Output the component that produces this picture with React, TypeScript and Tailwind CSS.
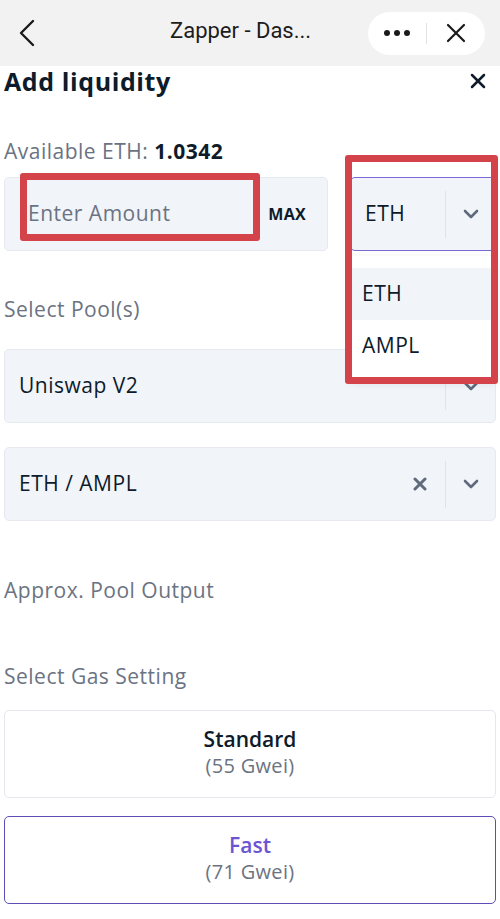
import React from 'react';

const Chevron = () => (
  <svg width="16" height="10" viewBox="0 0 16 10" fill="none">
    <path d="M2 2l6 6 6-6" stroke="#5f6b7c" strokeWidth="2.6" strokeLinecap="round" strokeLinejoin="round" />
  </svg>
);

const ClearX = () => (
  <svg width="14" height="14" viewBox="0 0 14 14" fill="none">
    <path d="M2 2l10 10M12 2L2 12" stroke="#5f6b7c" strokeWidth="3" strokeLinecap="round" />
  </svg>
);

function Select({ label, clearable = false, focused = false }: { label: string; clearable?: boolean; focused?: boolean }) {
  return (
    <div
      className={`flex items-center h-[74px] rounded-[5px] bg-[#f1f4f9] border ${
        focused ? 'border-[#7a68d3]' : 'border-[#e6e9ef]'
      }`}
    >
      <span className="flex-1 pl-[14px] text-[21px] tracking-[0.5px] text-[#0d1b2a]">{label}</span>
      {clearable && (
        <span className="w-[50px] flex justify-center">
          <ClearX />
        </span>
      )}
      <span className="w-px h-[47px] bg-[#dfe3ea]" />
      <span className="w-[49px] flex justify-center">
        <Chevron />
      </span>
    </div>
  );
}

function GasButton({ name, gwei, active = false }: { name: string; gwei: string; active?: boolean }) {
  return (
    <div
      className={`h-[88px] rounded-[5px] border flex flex-col items-center justify-center pb-[3px] bg-white ${
        active ? 'border-[#5b4fb5]' : 'border-[#e4e7ec]'
      }`}
    >
      <span className={`text-[21px] font-semibold leading-[27px] ${active ? 'text-[#6b55d3]' : 'text-[#0d1b2a]'}`}>{name}</span>
      <span className="text-[20px] leading-[26px] tracking-[0.3px] text-[#6b7382]">{gwei}</span>
    </div>
  );
}

const label = 'h-[30px] flex items-center text-[21px] tracking-[0.5px] text-[#6b7382]';

export default function App() {
  return (
    <div className="w-[500px] h-[919px] bg-white overflow-hidden relative font-['Open_Sans',sans-serif]">
      {/* browser bar */}
      <div className="h-[66px] bg-[#f2f2f2] flex items-center relative font-['Roboto',sans-serif]">
        <svg className="ml-[19px]" width="16" height="28" viewBox="0 0 16 28" fill="none">
          <path d="M14 2L2 14l12 12" stroke="#1a1a1a" strokeWidth="2.4" strokeLinecap="round" strokeLinejoin="round" />
        </svg>
        <span className="absolute left-[170px] top-[17px] text-[22px] leading-[28px] text-[#1c1c1c]">Zapper - Das...</span>
        <div className="ml-auto mr-[15px] w-[117px] h-[43px] rounded-full bg-white flex items-center">
          <span className="w-[58px] flex justify-center gap-[4px]">
            <span className="w-[6px] h-[6px] rounded-full bg-[#1a1a1a]" />
            <span className="w-[6px] h-[6px] rounded-full bg-[#1a1a1a]" />
            <span className="w-[6px] h-[6px] rounded-full bg-[#1a1a1a]" />
          </span>
          <span className="w-px h-[21px] bg-[#e3e3e3]" />
          <span className="flex-1 flex justify-center">
            <svg width="20" height="20" viewBox="0 0 20 20" fill="none">
              <path d="M2 2l16 16M18 2L2 18" stroke="#1a1a1a" strokeWidth="2.2" strokeLinecap="round" />
            </svg>
          </span>
        </div>
      </div>

      <div className="px-[4px]">
        <div className="h-[30px] flex items-center justify-between">
          <h1 className="text-[25px] font-bold tracking-[0.6px] text-[#0d1b2a] leading-[30px]">Add liquidity</h1>
          <svg className="mr-[10px]" width="16" height="16" viewBox="0 0 16 16" fill="none">
            <path d="M2 2l12 12M14 2L2 14" stroke="#0d1b2a" strokeWidth="2.5" strokeLinecap="round" />
          </svg>
        </div>

        <div className={`mt-[41px] ${label}`}>
          Available ETH:&nbsp;<span className="font-bold text-[#0d1b2a]">1.0342</span>
        </div>

        <div className="mt-[10px] flex gap-[22px]">
          <div className="w-[324px] h-[74px] rounded-[5px] bg-[#f1f4f9] border border-[#e6e9ef] flex items-center">
            <span className="flex-1 pl-[23px] text-[21px] tracking-[0.5px] text-[#6b7382]">Enter Amount</span>
            <span className="pr-[21px] text-[16px] font-bold tracking-[0.3px] text-[#0d1b2a]">MAX</span>
          </div>
          <div className="flex-1 relative">
            <Select label="ETH" focused />
            <div className="absolute left-0 right-0 top-[79px] bg-white pt-[12px] pb-[10px] shadow-[0_2px_8px_rgba(0,0,0,0.08)] z-10">
              <div className="h-[52px] flex items-center pl-[12px] bg-[#f1f4f9] text-[21px] tracking-[0.5px] text-[#0d1b2a]">ETH</div>
              <div className="h-[52px] flex items-center pl-[12px] text-[21px] tracking-[0.5px] text-[#0d1b2a]">AMPL</div>
            </div>
          </div>
        </div>

        <div className={`mt-[44px] ${label}`}>Select Pool(s)</div>

        <div className="mt-[24px]">
          <Select label="Uniswap V2" />
        </div>
        <div className="mt-[24px]">
          <Select label="ETH / AMPL" clearable />
        </div>

        <div className={`mt-[55px] ${label}`}>Approx. Pool Output</div>
        <div className={`mt-[56px] ${label}`}>Select Gas Setting</div>

        <div className="mt-[18px]">
          <GasButton name="Standard" gwei="(55 Gwei)" />
        </div>
        <div className="mt-[18px]">
          <GasButton name="Fast" gwei="(71 Gwei)" active />
        </div>
      </div>

      {/* annotation boxes */}
      <div className="absolute left-[20px] top-[173px] w-[240px] h-[68px] border-[7px] border-[#d5434a] rounded-[3px] z-20" />
      <div className="absolute left-[345px] top-[155px] w-[153px] h-[229px] border-[7px] border-[#d5434a] rounded-[3px] z-20" />
    </div>
  );
}
